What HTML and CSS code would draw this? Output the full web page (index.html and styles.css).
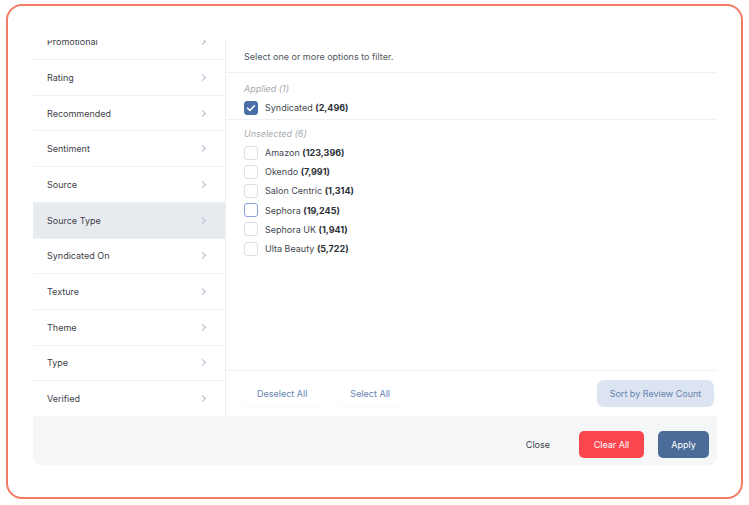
FILE: index.html
```html
<!DOCTYPE html>
<html>
<head>
<meta charset="utf-8">
<link rel="stylesheet" href="styles.css">
</head>
<body>
<div class="frame">
  <div class="panel">
    <div class="main">
      <div class="sidebar">
        <div class="list">
          <div class="row"><span>Promotional</span><span class="chev"></span></div>
          <div class="row"><span>Rating</span><span class="chev"></span></div>
          <div class="row"><span>Recommended</span><span class="chev"></span></div>
          <div class="row"><span>Sentiment</span><span class="chev"></span></div>
          <div class="row"><span>Source</span><span class="chev"></span></div>
          <div class="row active"><span>Source Type</span><span class="chev"></span></div>
          <div class="row"><span>Syndicated On</span><span class="chev"></span></div>
          <div class="row"><span>Texture</span><span class="chev"></span></div>
          <div class="row"><span>Theme</span><span class="chev"></span></div>
          <div class="row"><span>Type</span><span class="chev"></span></div>
          <div class="row"><span>Verified</span><span class="chev"></span></div>
        </div>
      </div>
      <div class="content">
        <div class="hint">Select one or more options to filter.</div>
        <div class="group applied">
          <div class="label">Applied (1)</div>
          <div class="opt"><span class="cb checked"><svg viewBox="0 0 14 14" width="14" height="14"><path d="M3.6 7.2l2.3 2.3 4.5-4.7" fill="none" stroke="#fff" stroke-width="1.6" stroke-linecap="round" stroke-linejoin="round"/></svg></span><span>Syndicated <b>(2,496)</b></span></div>
        </div>
        <div class="group">
          <div class="label">Unselected (6)</div>
          <div class="opt"><span class="cb"></span><span>Amazon <b>(123,396)</b></span></div>
          <div class="opt"><span class="cb"></span><span>Okendo <b>(7,991)</b></span></div>
          <div class="opt"><span class="cb"></span><span>Salon Centric <b>(1,314)</b></span></div>
          <div class="opt"><span class="cb focus"></span><span>Sephora <b>(19,245)</b></span></div>
          <div class="opt"><span class="cb"></span><span>Sephora UK <b>(1,941)</b></span></div>
          <div class="opt"><span class="cb"></span><span>Ulta Beauty <b>(5,722)</b></span></div>
        </div>
        <div class="actions">
          <button class="ghost">Deselect All</button>
          <button class="ghost">Select All</button>
          <button class="sort">Sort by Review Count</button>
        </div>
      </div>
    </div>
    <div class="footer">
      <button class="close">Close</button>
      <button class="clear">Clear All</button>
      <button class="apply">Apply</button>
    </div>
  </div>
</div>
</body>
</html>
```
FILE: styles.css
```css
* { box-sizing: border-box; }
html, body { margin: 0; background: #fff; }
body {
  font-family: "Inter", "Open Sans", sans-serif;
  color: #3a3e44;
  font-size: 9px;
}
.frame {
  margin: 4px 6px 6px 6px;
  height: 495px;
  border: 2px solid #f47b63;
  border-radius: 16px;
  padding: 31px 24px 32px 25px;
}
.panel {
  height: 428px;
  display: flex;
  flex-direction: column;
}
.main {
  height: 379px;
  display: flex;
}
.sidebar {
  width: 193px;
  margin-top: 3px;
  border-right: 1px solid #eceff2;
  overflow: hidden;
}
.list { margin-top: -15.6px; }
.row {
  height: 35.7px;
  border-bottom: 1px solid #eef1f3;
  display: flex;
  align-items: center;
  justify-content: space-between;
  padding: 0 18px 0 14px;
  color: #3d4148;
}
.row.active { background: #e7ebef; }
.chev {
  width: 5px;
  height: 5px;
  border-top: 1px solid #b0bccb;
  border-right: 1px solid #b0bccb;
  transform: rotate(45deg);
  margin-right: 2px;
}
.content {
  flex: 1;
  display: flex;
  flex-direction: column;
}
.hint {
  height: 36px;
  padding: 14px 0 0 18px;
  border-bottom: 1.5px solid #eef1f3;
  color: #50555c;
}
.group { padding: 0 0 0 18px; }
.group.applied {
  border-bottom: 1.5px solid #eef1f3;
  padding-bottom: 1px;
}
.label {
  font-style: italic;
  color: #a5a9ae;
  line-height: 12px;
  padding-top: 10px;
  margin-bottom: 3.4px;
}
.group + .group .label { padding-top: 8px; }
.opt {
  height: 19.2px;
  display: flex;
  align-items: center;
  gap: 7px;
  color: #44484f;
}
.opt b { font-weight: 700; color: #2d3036; }
.cb {
  width: 14px;
  height: 14px;
  border: 1px solid #dcdfe3;
  border-radius: 3px;
  flex: none;
}
.cb.checked {
  background: #4a6fa6;
  border-color: #4a6fa6;
  position: relative;
}
.cb.checked svg { position: absolute; left: -1px; top: -1px; }
.cb.focus { border-color: #86a6da; }
.actions {
  margin-top: auto;
  height: 46px;
  border-top: 1.5px solid #eef1f3;
  display: flex;
  align-items: center;
  padding: 0 3px 0 17px;
  gap: 15px;
}
button {
  font-family: inherit;
  font-size: 9px;
  border: none;
  cursor: pointer;
}
.ghost {
  background: #fff;
  color: #6784b3;
  height: 27px;
  padding: 0 14px;
  border-radius: 8px;
  box-shadow: 0 1px 2px rgba(0,0,0,0.03);
}
.sort {
  margin-left: auto;
  background: #dde4f1;
  color: #6582ae;
  height: 27px;
  width: 117px;
  border-radius: 7px;
}
.footer {
  height: 49px;
  background: #f5f6f8;
  border-radius: 0 0 9px 9px;
  display: flex;
  align-items: center;
  justify-content: flex-end;
  padding: 8px 8px 0 0;
  gap: 14px;
}
.close {
  background: transparent;
  color: #3a3e44;
  padding: 0;
  margin-right: 15px;
}
.clear {
  background: #f9464f;
  color: #fff;
  width: 65px;
  height: 27px;
  border-radius: 5px;
}
.apply {
  background: #4b6c99;
  color: #fff;
  width: 51px;
  height: 27px;
  border-radius: 5px;
}
```
